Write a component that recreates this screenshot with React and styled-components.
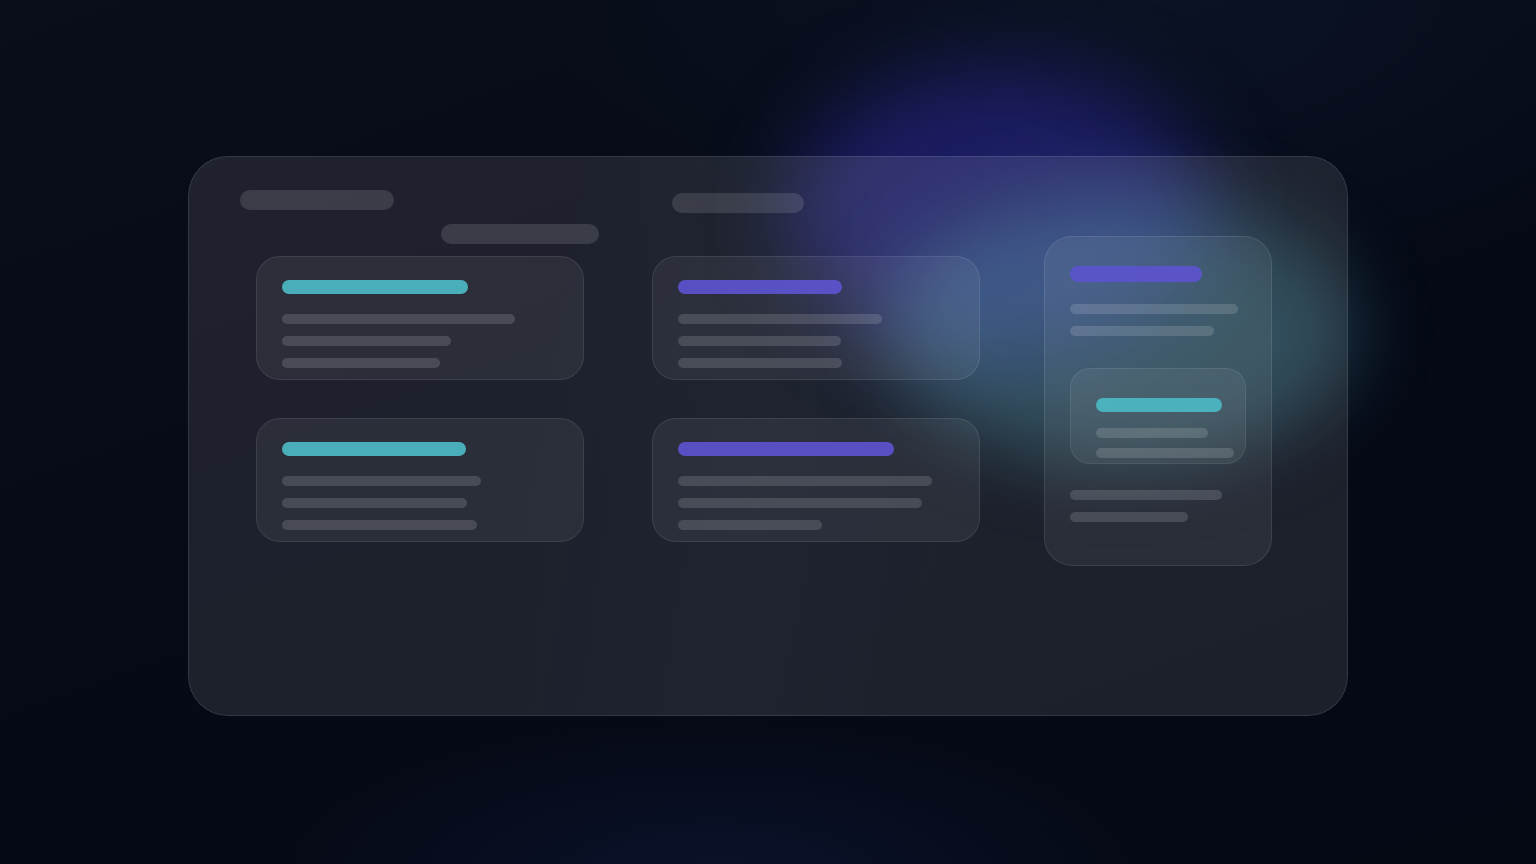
import React from 'react';
import styled, { createGlobalStyle } from 'styled-components';

const GlobalStyle = createGlobalStyle`
    html, body {
        margin: 0;
        padding: 0;
        background: #070b17;
        font-family: "Inter", "Liberation Sans", sans-serif;
    }
    * {
        box-sizing: border-box;
    }
`;

const leftCards = [
    { accent: 'teal', bar: 186, lines: [233, 169, 158] },
    { accent: 'purple', bar: 164, lines: [204, 163, 164] },
    { accent: 'teal', bar: 184, lines: [199, 185, 195] },
    { accent: 'purple', bar: 216, lines: [254, 244, 144] },
];

export default function App() {
    return (
        <PageStyle>
            <GlobalStyle />
            <GlowStyle $x={790} $y={70} $w={420} $h={290} $blur={42} $color="rgba(48, 44, 170, 0.5)" />
            <GlowStyle $x={885} $y={195} $w={470} $h={270} $blur={38} $color="rgba(72, 152, 172, 0.36)" />

            <PanelStyle>
                <MainAreaStyle>
                    <HeaderRowStyle>
                        <PillStyle $w={154} />
                        <PillStyle $w={132} $offset={3} $gap={278} />
                    </HeaderRowStyle>
                    <SubPillStyle />

                    <CardGridStyle>
                        {leftCards.map((card, idx) => (
                            <CardStyle key={idx}>
                                <AccentStyle $kind={card.accent} style={{ width: card.bar }} />
                                <LinesStyle>
                                    {card.lines.map((w, i) => (
                                        <LineStyle key={i} style={{ width: w }} />
                                    ))}
                                </LinesStyle>
                            </CardStyle>
                        ))}
                    </CardGridStyle>
                </MainAreaStyle>

                <TallCardStyle>
                    <AccentStyle $kind="purple" $tall style={{ width: 132 }} />
                    <TallLinesStyle>
                        <LineStyle style={{ width: 168 }} />
                        <LineStyle style={{ width: 144 }} />
                    </TallLinesStyle>

                    <InnerCardStyle>
                        <AccentStyle $kind="teal" style={{ width: 126 }} />
                        <InnerLinesStyle>
                            <LineStyle style={{ width: 112 }} />
                            <LineStyle style={{ width: 138 }} />
                        </InnerLinesStyle>
                    </InnerCardStyle>

                    <BottomLinesStyle>
                        <LineStyle style={{ width: 152 }} />
                        <LineStyle style={{ width: 118 }} />
                    </BottomLinesStyle>
                </TallCardStyle>
            </PanelStyle>
        </PageStyle>
    );
}

const PageStyle = styled.div`
    position: relative;
    width: 1536px;
    height: 864px;
    overflow: hidden;
    display: flex;
    justify-content: center;
    align-items: flex-start;
    padding-top: 156px;
    background:
        radial-gradient(ellipse 600px 220px at 720px 880px, rgba(16, 26, 64, 0.5), transparent 75%),
        radial-gradient(ellipse 800px 400px at 1150px 0px, rgba(12, 22, 40, 0.7), transparent 75%),
        linear-gradient(160deg, #0a0e1b 0%, #060a17 50%, #050914 100%);
`;

const GlowStyle = styled.div`
    position: absolute;
    left: ${p => p.$x}px;
    top: ${p => p.$y}px;
    width: ${p => p.$w}px;
    height: ${p => p.$h}px;
    border-radius: 50%;
    background: ${p => p.$color};
    filter: blur(${p => p.$blur}px);
    pointer-events: none;
    z-index: 0;
`;

const PanelStyle = styled.div`
    position: relative;
    z-index: 1;
    display: flex;
    align-items: flex-start;
    gap: 64px;
    width: 1160px;
    height: 560px;
    padding: 33px 0 0 51px;
    border-radius: 40px;
    background:
        linear-gradient(100deg, rgba(255, 255, 255, 0) 30%, rgba(120, 200, 220, 0.02) 50%, rgba(255, 255, 255, 0) 70%),
        rgba(255, 255, 255, 0.095);
    border: 1px solid rgba(255, 255, 255, 0.1);
`;

const MainAreaStyle = styled.div`
    display: flex;
    flex-direction: column;
    width: 740px;
`;

const HeaderRowStyle = styled.div`
    display: flex;
    align-items: flex-start;
    height: 23px;
`;

const PillStyle = styled.div`
    width: ${p => p.$w}px;
    height: 20px;
    margin-top: ${p => p.$offset || 0}px;
    margin-left: ${p => p.$gap || 0}px;
    border-radius: 10px;
    background: rgba(255, 255, 255, 0.12);
`;

const SubPillStyle = styled.div`
    width: 158px;
    height: 20px;
    margin-top: 11px;
    margin-left: 201px;
    border-radius: 10px;
    background: rgba(255, 255, 255, 0.12);
`;

const CardGridStyle = styled.div`
    display: grid;
    grid-template-columns: 328px 328px;
    column-gap: 68px;
    row-gap: 38px;
    margin-top: 12px;
    padding-left: 16px;
`;

const CardStyle = styled.div`
    display: flex;
    flex-direction: column;
    height: 124px;
    padding: 23px 25px;
    border-radius: 24px;
    background: rgba(255, 255, 255, 0.06);
    border: 1px solid rgba(255, 255, 255, 0.09);
`;

const AccentStyle = styled.div`
    height: ${p => (p.$tall ? 16 : 14)}px;
    border-radius: 8px;
    background: ${p => (p.$kind === 'teal' ? 'rgba(76, 186, 196, 0.92)' : 'rgba(92, 84, 206, 0.92)')};
    flex-shrink: 0;
`;

const LinesStyle = styled.div`
    display: flex;
    flex-direction: column;
    gap: 12px;
    margin-top: 20px;
`;

const LineStyle = styled.div`
    height: 10px;
    border-radius: 5px;
    background: rgba(255, 255, 255, 0.14);
`;

const TallCardStyle = styled.div`
    display: flex;
    flex-direction: column;
    width: 228px;
    height: 330px;
    margin-top: 46px;
    padding: 29px 25px;
    border-radius: 28px;
    background: rgba(255, 255, 255, 0.06);
    border: 1px solid rgba(255, 255, 255, 0.1);
`;

const TallLinesStyle = styled.div`
    display: flex;
    flex-direction: column;
    gap: 12px;
    margin-top: 22px;
`;

const InnerCardStyle = styled.div`
    display: flex;
    flex-direction: column;
    width: 176px;
    height: 96px;
    margin-top: 32px;
    padding: 29px 25px 0;
    border-radius: 20px;
    background: rgba(255, 255, 255, 0.06);
    border: 1px solid rgba(255, 255, 255, 0.08);
`;

const InnerLinesStyle = styled.div`
    display: flex;
    flex-direction: column;
    gap: 10px;
    margin-top: 16px;
`;

const BottomLinesStyle = styled.div`
    display: flex;
    flex-direction: column;
    gap: 12px;
    margin-top: 26px;
`;
